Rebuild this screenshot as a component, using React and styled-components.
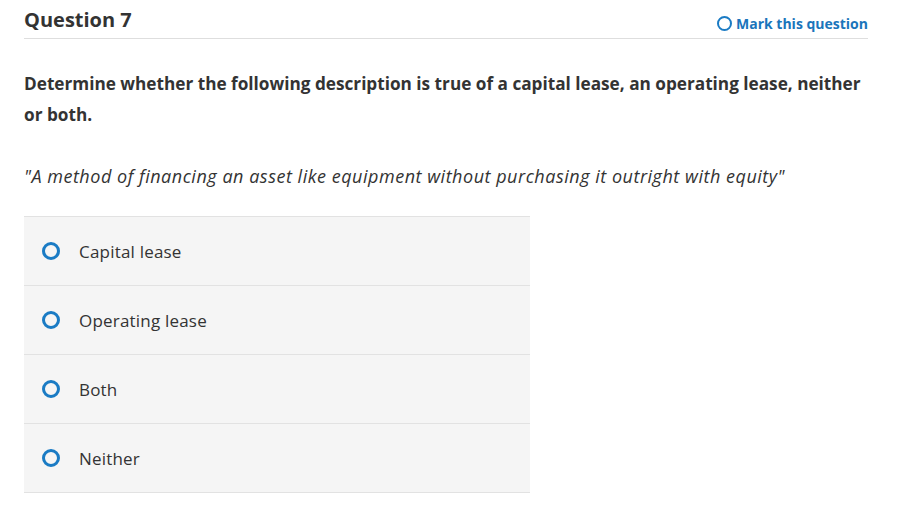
import React from "react";
import styled, { createGlobalStyle } from "styled-components";

const GlobalStyle = createGlobalStyle`
  html, body {
    margin: 0;
    padding: 0;
    background: #ffffff;
  }
  body {
    font-family: "Open Sans", Lato, Arial, sans-serif;
    color: #333333;
  }
`;

const options = ["Capital lease", "Operating lease", "Both", "Neither"];

const Page = styled.div`
  padding: 0 30px 0 24px;
`;

const Header = styled.div`
  display: flex;
  align-items: flex-end;
  justify-content: space-between;
  height: 39px;
  border-bottom: 1px solid #dedede;
  box-sizing: border-box;
  padding-bottom: 5px;
`;

const Title = styled.h2`
  margin: 0;
  font-size: 20px;
  font-weight: 700;
  color: #333333;
  line-height: 26px;
`;

const MarkButton = styled.button`
  display: flex;
  align-items: center;
  gap: 4px;
  border: 0;
  background: none;
  padding: 0;
  font-family: inherit;
  font-size: 14px;
  font-weight: 700;
  color: #1a75bb;
  cursor: pointer;
`;

const Prompt = styled.p`
  margin: 29px 0 0;
  font-size: 17.2px;
  font-weight: 700;
  line-height: 31px;
  color: #333333;
  max-width: 844px;
`;

const Quote = styled.p`
  margin: 31px 0 0;
  font-size: 18px;
  font-style: italic;
  letter-spacing: 0.52px;
  line-height: 31px;
  color: #333333;
`;

const Choices = styled.div`
  margin-top: 24px;
  width: 506px;
  border-top: 1px solid #e2e2e2;
`;

const Choice = styled.label`
  display: flex;
  align-items: center;
  gap: 19px;
  height: 68px;
  padding-left: 18px;
  background: #f5f5f5;
  border-bottom: 1px solid #e2e2e2;
  font-size: 17px;
  letter-spacing: 0.2px;
  color: #333333;
  cursor: pointer;
`;

const Radio = styled.span`
  width: ${(p) => p.$size}px;
  height: ${(p) => p.$size}px;
  box-sizing: border-box;
  border-radius: 50%;
  border: ${(p) => p.$stroke}px solid #1a7bc4;
  flex-shrink: 0;
`;

export default function App() {
  return (
    <>
      <GlobalStyle />
      <Page>
        <Header>
          <Title>Question 7</Title>
          <MarkButton>
            <Radio $size={15} $stroke={2} />
            Mark this question
          </MarkButton>
        </Header>
        <Prompt>
          Determine whether the following description is true of a capital lease, an operating
          lease, neither or both.
        </Prompt>
        <Quote>
          "A method of financing an asset like equipment without purchasing it outright with equity"
        </Quote>
        <Choices>
          {options.map((o) => (
            <Choice key={o}>
              <Radio $size={18} $stroke={3} />
              {o}
            </Choice>
          ))}
        </Choices>
      </Page>
    </>
  );
}
